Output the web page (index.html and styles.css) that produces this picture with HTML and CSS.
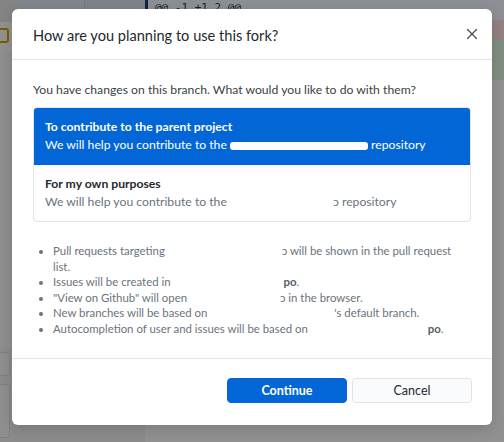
FILE: index.html
```html
<!DOCTYPE html>
<html>
<head>
<meta charset="utf-8">
<link rel="stylesheet" href="styles.css">
</head>
<body>
<div class="app">
  <div class="sidebar">
    <div class="side-top">
      <div class="st-a"></div>
      <div class="st-b"></div>
      <div class="st-c"></div>
    </div>
    <div class="side-row"><span class="mod-badge"></span></div>
    <div class="side-fill"></div>
    <div class="side-box"></div>
    <div class="side-box tall"></div>
  </div>
  <div class="diff">
    <div class="hunk">@@ -1 +1,2 @@</div>
    <div class="diff-body">
      <div class="del-line"></div>
      <div class="add-line"></div>
    </div>
  </div>
</div>

<div class="overlay">
  <div class="dialog">
    <div class="dlg-header">
      <h1 class="dlg-title">How are you planning to use this fork?</h1>
      <svg class="close" width="12" height="12" viewBox="0 0 12 12"><path d="M1.5 1.5 L10.5 10.5 M10.5 1.5 L1.5 10.5" stroke="#4a4f55" stroke-width="1.3" fill="none" stroke-linecap="round"/></svg>
    </div>
    <div class="dlg-body">
      <p class="question">You have changes on this branch. What would you like to do with them?</p>
      <div class="options">
        <div class="option selected">
          <div class="opt-title">To contribute to the parent project</div>
          <div class="opt-desc">We will help you contribute to the <span class="redact white w138"></span> repository</div>
        </div>
        <div class="option">
          <div class="opt-title">For my own purposes</div>
          <div class="opt-desc">We will help you contribute to the <span class="redact w103"></span>ɔ repository</div>
        </div>
      </div>
      <ul class="notes">
        <li>Pull requests targeting <span class="redact w114"></span>ɔ will be shown in the pull request list.</li>
        <li>Issues will be created in <span class="redact w110"></span><b>po</b>.</li>
        <li>"View on Github" will open <span class="redact w90"></span>ɔ in the browser.</li>
        <li>New branches will be based on <span class="redact w124"></span>'s default branch.</li>
        <li>Autocompletion of user and issues will be based on <span class="redact w117"></span><b>po</b>.</li>
      </ul>
    </div>
    <div class="dlg-footer">
      <button class="btn primary">Continue</button>
      <button class="btn">Cancel</button>
    </div>
  </div>
</div>
</body>
</html>
```

FILE: styles.css
```css
* { box-sizing: border-box; }
html, body { margin: 0; padding: 0; }
body {
  width: 504px;
  height: 442px;
  overflow: hidden;
  font-family: "Lato", "Noto Sans", sans-serif;
  position: relative;
  background: #fff;
}

.app {
  display: flex;
  height: 442px;
}
.sidebar {
  width: 145px;
  display: flex;
  flex-direction: column;
  background: #f0f0f0;
}
.side-top { display: flex; height: 22px; }
.st-a { width: 21px; background: #e4e4e4; }
.st-b { width: 64px; background: #dfe6f2; border-right: 1px solid #c9d0dc; }
.st-c { flex: 1; background: #dae2ee; }
.side-row {
  height: 30px;
  padding-top: 6px;
  background: #fafafa;
}
.mod-badge {
  display: block;
  width: 9px;
  height: 15px;
  border: 2px solid #c8a400;
  border-left: none;
  border-radius: 0 3px 3px 0;
}
.side-fill { flex: 1; background: #f5f5f5; }
.side-box {
  height: 24px;
  width: 10px;
  margin: 4px 0;
  border: 1px solid #dcdcdc;
  border-left: none;
  border-radius: 0 4px 4px 0;
  background: #f7f7f7;
}
.side-box.tall { height: 54px; }
.diff { flex: 1; display: flex; flex-direction: column; background: #fafafa; }
.hunk {
  height: 22px;
  font-family: "DejaVu Sans Mono", monospace;
  font-size: 11px;
  line-height: 16px;
  padding-left: 7px;
  color: #333;
  background: #f1f8ff;
  border-left: 3px solid #1f3e70;
}
.diff-body { flex: 1; display: flex; flex-direction: column; align-items: flex-end; }
.del-line { width: 14px; height: 20px; background: #ffdcdc; margin-top: -2px; }
.add-line { width: 14px; height: 40px; background: #d9f5dc; }

.overlay {
  position: absolute;
  inset: 0;
  background: rgba(0, 0, 0, 0.42);
  padding: 9px 12px 0 12px;
}
.dialog {
  width: 480px;
  height: 416px;
  background: #fff;
  border-radius: 6px;
  display: flex;
  flex-direction: column;
  box-shadow: 0 4px 14px rgba(0,0,0,0.15);
}
.dlg-header {
  height: 51px;
  border-bottom: 1px solid #e1e4e8;
  display: flex;
  align-items: center;
  justify-content: space-between;
  padding: 2px 14px 0 21px;
}
.dlg-title {
  margin: 0;
  font-size: 14.6px;
  font-weight: 400;
  color: #24292e;
}
.close { display: block; margin-top: -2px; }
.dlg-body {
  flex: 1;
  padding: 21px 21px 0 21px;
}
.question {
  margin: 0 0 8px 0;
  font-size: 12.2px;
  line-height: 18px;
  color: #3a3f45;
}
.options {
  border: 1px solid #e1e4e8;
  border-radius: 4px;
  overflow: hidden;
}
.option {
  padding: 10px 11px 10px 11px;
  height: 56px;
  font-size: 12.2px;
  line-height: 18px;
}
.option.selected {
  background: #0366d6;
  height: 58px;
  margin: -1px -1px 0 -1px;
  padding: 11px 12px 10px 12px;
  border-radius: 4px 4px 0 0;
}
.opt-title { font-weight: 700; color: #24292e; }
.opt-desc { color: #6a737d; }
.selected .opt-title, .selected .opt-desc { color: #fff; }
.redact {
  display: inline-block;
  height: 8px;
  vertical-align: middle;
}
.redact.white { background: #fff; border-radius: 3px; }
.w138 { width: 138px; }
.w103 { width: 103px; }
.w114 { width: 114px; }
.w110 { width: 110px; }
.w90 { width: 90px; }
.w124 { width: 124px; }
.w117 { width: 117px; }
.notes {
  margin: 21px 0 0 0;
  padding: 0 0 0 20px;
  font-size: 11.4px;
  line-height: 15.6px;
  color: #6a737d;
}
.notes b { font-weight: 700; color: #586069; }
.dlg-footer {
  height: 67px;
  border-top: 1px solid #e1e4e8;
  display: flex;
  justify-content: flex-end;
  align-items: center;
  gap: 5px;
  padding: 0 20px 3px 0;
}
.btn {
  width: 120px;
  height: 25px;
  border-radius: 4px;
  border: 1px solid #e1e4e8;
  background: #fafbfc;
  font-family: inherit;
  font-size: 12.5px;
  color: #24292e;
}
.btn.primary {
  background: #0366d6;
  border-color: #0366d6;
  color: #fff;
  font-weight: 700;
}
```
